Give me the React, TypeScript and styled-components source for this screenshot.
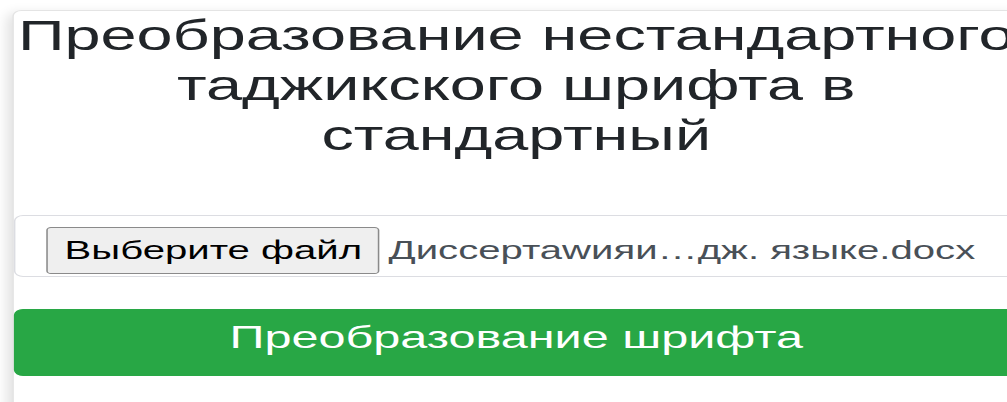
import React from "react";
import styled, { createGlobalStyle } from "styled-components";

// The page is drawn at a horizontal zoom factor; everything inside Stage uses plain CSS pixels.
const ZOOM_X = 1.542;

const GlobalStyle = createGlobalStyle`
  html, body {
    margin: 0;
    padding: 0;
    background: #ffffff;
    overflow: hidden;
  }
  body {
    font-family: "Liberation Sans", Arial, sans-serif;
  }
`;

const Stage = styled.div`
  width: ${1007 / ZOOM_X}px;
  transform: scaleX(${ZOOM_X});
  transform-origin: 0 0;
  padding: 10px 0 0 7.8px;
  box-sizing: border-box;
`;

const Card = styled.section`
  width: 652px;
  background: #ffffff;
  border: 1px solid #e4e4e4;
  border-radius: 6px;
  box-shadow: -4px 3px 9px rgba(0, 0, 0, 0.11);
  padding-bottom: 40px;
`;

const Title = styled.h1`
  margin: 0;
  font-family: "Liberation Sans", Arial, sans-serif;
  font-size: 42px;
  font-weight: 400;
  line-height: 50px;
  text-align: center;
  color: #212529;
`;

const FileField = styled.div`
  margin-top: 54px;
  height: 62px;
  box-sizing: border-box;
  border: 1px solid #dcdde2;
  border-radius: 6px;
  padding: 11px 0 0 20.7px;
  display: flex;
  align-items: flex-start;
  font-family: "Liberation Sans", Arial, sans-serif;
  font-size: 26px;
`;

const FileRow = styled.div`
  display: flex;
  align-items: center;
  gap: 5.8px;
`;

const PickButton = styled.button`
  font-family: "Liberation Sans", Arial, sans-serif;
  font-size: 26px;
  color: #000000;
  background: #efefef;
  border: 1px solid #8a8a8a;
  border-radius: 3px;
  height: 47px;
  padding: 0 10.4px;
  cursor: pointer;
`;

const FileName = styled.span`
  color: #495057;
  white-space: nowrap;
`;

const ConvertButton = styled.button`
  display: block;
  width: 100%;
  margin-top: 32px;
  height: 67px;
  padding: 0 0 11px;
  border: 1px solid #28a745;
  border-radius: 6px;
  background: #28a745;
  color: #ffffff;
  font-family: "Liberation Sans", Arial, sans-serif;
  font-size: 31.5px;
  cursor: pointer;
`;

export default function App() {
  return (
    <>
      <GlobalStyle />
      <Stage>
        <Card>
          <Title>Преобразование нестандартного таджикского шрифта в стандартный</Title>
          <FileField>
            <FileRow>
              <PickButton type="button">Выберите файл</PickButton>
              <FileName>Диссертаwияи…дж. языке.docx</FileName>
            </FileRow>
          </FileField>
          <ConvertButton type="button">Преобразование шрифта</ConvertButton>
        </Card>
      </Stage>
    </>
  );
}
